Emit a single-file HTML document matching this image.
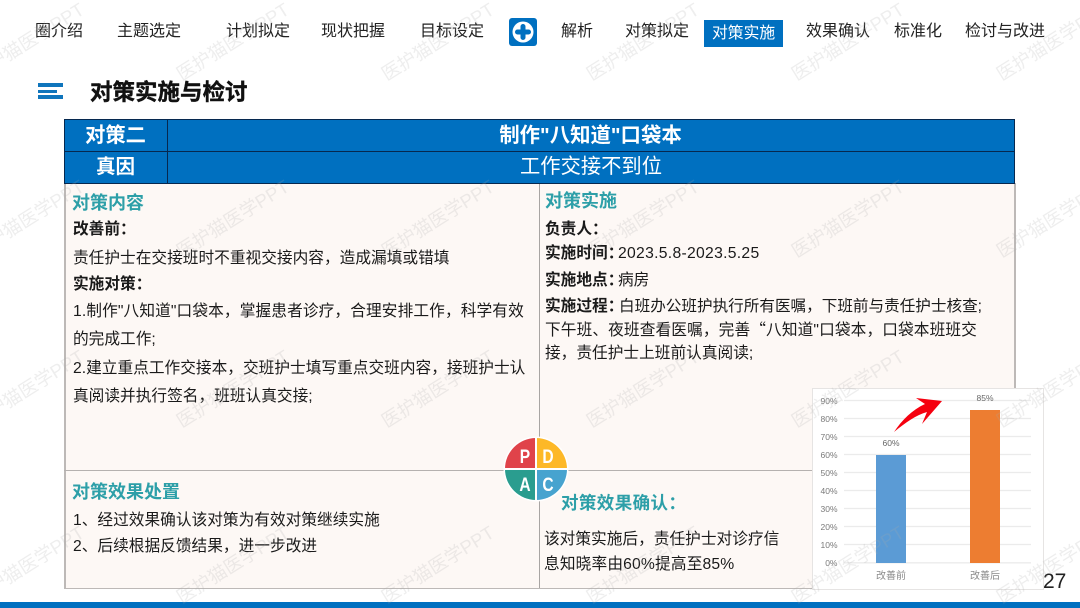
<!DOCTYPE html>
<html lang="zh-CN"><head><meta charset="utf-8"><title>对策实施与检讨</title>
<style>
html,body{margin:0;padding:0;background:#fff}
#p{position:relative;width:1080px;height:608px;overflow:hidden;background:#fff;font-family:"Liberation Sans","Noto Sans CJK SC",sans-serif;color:#1a1a1a}
#p div{position:absolute}
.t{white-space:nowrap;line-height:20px;font-size:15.7px}
.n{white-space:nowrap;line-height:20px;font-size:16px;color:#222}
.h{font-weight:700;color:#2d9fa8;font-size:18px;white-space:nowrap;line-height:22px}
b{font-weight:700}
.w{font-size:18.5px;line-height:24px;white-space:nowrap;color:rgba(170,170,170,.2);transform:translate(-50%,-50%) rotate(-32deg);z-index:9}
.c{text-align:center;color:#fff;white-space:nowrap}
.q{font-family:"Noto Sans CJK SC",sans-serif}
</style></head><body><div id="p">

<div class="n" style="left:35px;top:22px">圈介绍</div>
<div class="n" style="left:117px;top:22px">主题选定</div>
<div class="n" style="left:226px;top:22px">计划拟定</div>
<div class="n" style="left:321px;top:22px">现状把握</div>
<div class="n" style="left:420px;top:22px">目标设定</div>
<svg style="position:absolute;left:509px;top:18px" width="28" height="28" viewBox="0 0 28 28"><rect width="28" height="28" rx="3" fill="#0070c0"/><circle cx="14" cy="14" r="10.500" fill="#fff"/><path d="M14 8.500v11M8.500 14h11" stroke="#0070c0" stroke-width="5" stroke-linecap="round"/></svg>
<div class="n" style="left:561px;top:22px">解析</div>
<div class="n" style="left:625px;top:22px">对策拟定</div>
<div style="left:704px;top:20px;width:79px;height:27px;background:#0070c0"></div>
<div class="n" style="left:712px;top:24px;color:#fff;font-size:15.8px">对策实施</div>
<div class="n" style="left:806px;top:22px">效果确认</div>
<div class="n" style="left:894px;top:22px">标准化</div>
<div class="n" style="left:965px;top:22px">检讨与改进</div>

<div style="left:38px;top:83px;width:25px;height:3.500px;background:#0f75bc"></div>
<div style="left:38px;top:89.500px;width:19px;height:3px;background:#0f75bc"></div>
<div style="left:38px;top:95px;width:25px;height:3.500px;background:#0f75bc"></div>
<div style="left:90px;top:80px;font-size:22.500px;font-weight:700;line-height:26px;color:#111;white-space:nowrap;-webkit-text-stroke:.4px #111">对策实施与检讨</div>

<div style="left:64px;top:183px;width:951px;height:405px;background:#fdf8f5"></div>
<div style="left:64px;top:183px;width:1.500px;height:405px;background:#bdb9b7"></div>
<div style="left:1014px;top:183px;width:1.500px;height:205px;background:#bdb9b7"></div>
<div style="left:64px;top:587.500px;width:750px;height:1.500px;background:#bdb9b7"></div>
<div style="left:539px;top:183px;width:1px;height:405px;background:#a8a5a3"></div>
<div style="left:64px;top:470px;width:750px;height:1px;background:#b5b1af"></div>

<div style="left:64px;top:118.500px;width:951px;height:65px;background:#0070c0"></div>
<div style="left:64px;top:118.500px;width:951px;height:1.500px;background:#06284f"></div>
<div style="left:64px;top:150.500px;width:951px;height:1.500px;background:#06284f"></div>
<div style="left:64px;top:182.500px;width:951px;height:1.500px;background:#06284f"></div>
<div style="left:64px;top:118.500px;width:1.200px;height:65px;background:#06284f"></div>
<div style="left:1014px;top:118.500px;width:1.200px;height:65px;background:#06284f"></div>
<div style="left:167px;top:118.500px;width:1.200px;height:65px;background:#06284f"></div>
<div class="c" style="left:64px;width:103px;top:122px;font-size:20.300px;font-weight:700;line-height:28px">对策二</div>
<div class="c" style="left:64px;width:103px;top:153px;font-size:19.500px;font-weight:700;line-height:28px">真因</div>
<div class="c" style="left:167px;width:848px;top:122px;font-size:20.400px;font-weight:700;line-height:28px;text-indent:-1px">制作"八知道"口袋本</div>
<div class="c" style="left:167px;width:848px;top:153px;font-size:20.300px;line-height:28px">工作交接不到位</div>

<div class="h" style="left:72px;top:192px">对策内容</div>
<div class="t" style="left:73px;top:220px"><b>改善前：</b></div>
<div class="t" style="left:73px;top:248.500px">责任护士在交接班时不重视交接内容，造成漏填或错填</div>
<div class="t" style="left:73px;top:274.500px"><b>实施对策：</b></div>
<div class="t" style="left:73px;top:302px;letter-spacing:.1px">1.制作"八知道"口袋本，掌握患者诊疗，合理安排工作，科学有效</div>
<div class="t" style="left:73px;top:330px">的完成工作;</div>
<div class="t" style="left:73px;top:359px">2.建立重点工作交接本，交班护士填写重点交班内容，接班护士认</div>
<div class="t" style="left:73px;top:387px">真阅读并执行签名，班班认真交接;</div>

<div class="h" style="left:545px;top:190px">对策实施</div>
<div class="t" style="left:545px;top:219.500px"><b>负责人：</b></div>
<div class="t" style="left:545px;top:244px"><b>实施时间：</b></div>
<div class="t" style="left:618px;top:244px;letter-spacing:.3px">2023.5.8-2023.5.25</div>
<div class="t" style="left:545px;top:270.500px"><b>实施地点：</b></div>
<div class="t" style="left:618px;top:270.500px">病房</div>
<div class="t" style="left:545px;top:296.500px"><b>实施过程：</b></div>
<div class="t" style="left:619px;top:296.500px;font-size:15.600px">白班办公班护执行所有医嘱，下班前与责任护士核查;</div>
<div class="t" style="left:545px;top:318.500px;letter-spacing:.1px">下午班、夜班查看医嘱，完善<span class="q">“</span>八知道"口袋本，口袋本班班交</div>
<div class="t" style="left:545px;top:343.500px">接，责任护士上班前认真阅读;</div>

<div class="h" style="left:72px;top:481px">对策效果处置</div>
<div class="t" style="left:73px;top:510.500px">1、经过效果确认该对策为有效对策继续实施</div>
<div class="t" style="left:73px;top:536.500px">2、后续根据反馈结果，进一步改进</div>

<div class="h" style="left:561px;top:492px;letter-spacing:.4px;font-size:17.500px">对策效果确认：</div>
<div class="t" style="left:544px;top:529.500px">该对策实施后，责任护士对诊疗信</div>
<div class="t" style="left:544px;top:554.500px;letter-spacing:.15px">息知晓率由60%提高至85%</div>

<svg style="position:absolute;left:503px;top:436px" width="66" height="66" viewBox="0 0 66 66">
<circle cx="33" cy="33" r="32.500" fill="#fff"/>
<path d="M33 33V2A31 31 0 0 0 2 33Z" fill="#e0434a"/>
<path d="M33 33V2A31 31 0 0 1 64 33Z" fill="#fdb827"/>
<path d="M33 33H2A31 31 0 0 0 33 64Z" fill="#2a9d8f"/>
<path d="M33 33H64A31 31 0 0 1 33 64Z" fill="#47a3cf"/>
<path d="M33 1V65M1 33H65" stroke="#fff" stroke-width="2"/>
<g font-family="Liberation Sans,sans-serif" font-weight="700" font-size="19" fill="#fff" text-anchor="middle">
<text transform="translate(22 27) scale(.82 1)">P</text><text transform="translate(45 27) scale(.82 1)">D</text><text transform="translate(22 55) scale(.82 1)">A</text><text transform="translate(45 55) scale(.82 1)">C</text></g>
</svg>

<div style="left:811.500px;top:388px;width:232.500px;height:202px;background:#fff;border:1.500px solid #e6e4e3;box-sizing:border-box"></div>
<svg style="position:absolute;left:812px;top:388px" width="232" height="202" viewBox="0 0 232 202" font-family="Liberation Sans,Noto Sans CJK SC,sans-serif">
<path d="M32 12.500H219M32 30.500H219M32 48.500H219M32 66.500H219M32 84.500H219M32 102.500H219M32 120.500H219M32 138.500H219M32 156.500H219M32 174.800H219" stroke="#ebebeb" stroke-width="1.300" fill="none"/>
<g fill="#7a7a7a" font-size="8.500" text-anchor="end">
<text x="25.500" y="16">90%</text><text x="25.500" y="34">80%</text><text x="25.500" y="52">70%</text><text x="25.500" y="70">60%</text><text x="25.500" y="88">50%</text><text x="25.500" y="106">40%</text><text x="25.500" y="124">30%</text><text x="25.500" y="142">20%</text><text x="25.500" y="160">10%</text><text x="25.500" y="178">0%</text>
</g>
<rect x="64" y="67" width="30" height="108" fill="#5b9bd5"/>
<rect x="158" y="22" width="30" height="153" fill="#ed7d31"/>
<g fill="#666" font-size="8.500" text-anchor="middle"><text x="79" y="58">60%</text><text x="173" y="13">85%</text></g>
<g fill="#8a8a8a" font-size="10" text-anchor="middle"><text x="79" y="191">改善前</text><text x="173" y="191">改善后</text></g>
<path d="M82 44C90 32 100 22 113 16L104 10L130 13L110 36L115 24C104 27 93 35 82 44Z" fill="#f5000f"/>
</svg>
<div style="left:1043px;top:570px;font-size:21px;line-height:24px;color:#222;z-index:5">27</div>

<div style="left:0;top:602px;width:1080px;height:6px;background:#0070c0"></div>

<div class="w" style="left:28px;top:42px">医护猫医学PPT</div><div class="w" style="left:233px;top:42px">医护猫医学PPT</div><div class="w" style="left:438px;top:42px">医护猫医学PPT</div><div class="w" style="left:643px;top:42px">医护猫医学PPT</div><div class="w" style="left:848px;top:42px">医护猫医学PPT</div><div class="w" style="left:1053px;top:42px">医护猫医学PPT</div>
<div class="w" style="left:28px;top:219px">医护猫医学PPT</div><div class="w" style="left:233px;top:219px">医护猫医学PPT</div><div class="w" style="left:438px;top:219px">医护猫医学PPT</div><div class="w" style="left:643px;top:219px">医护猫医学PPT</div><div class="w" style="left:848px;top:219px">医护猫医学PPT</div><div class="w" style="left:1053px;top:219px">医护猫医学PPT</div>
<div class="w" style="left:28px;top:389px">医护猫医学PPT</div><div class="w" style="left:233px;top:389px">医护猫医学PPT</div><div class="w" style="left:438px;top:389px">医护猫医学PPT</div><div class="w" style="left:643px;top:389px">医护猫医学PPT</div><div class="w" style="left:848px;top:389px">医护猫医学PPT</div><div class="w" style="left:1053px;top:389px">医护猫医学PPT</div>
<div class="w" style="left:28px;top:565px">医护猫医学PPT</div><div class="w" style="left:233px;top:565px">医护猫医学PPT</div><div class="w" style="left:438px;top:565px">医护猫医学PPT</div><div class="w" style="left:643px;top:565px">医护猫医学PPT</div><div class="w" style="left:848px;top:565px">医护猫医学PPT</div><div class="w" style="left:1053px;top:565px">医护猫医学PPT</div>
</div></body></html>
